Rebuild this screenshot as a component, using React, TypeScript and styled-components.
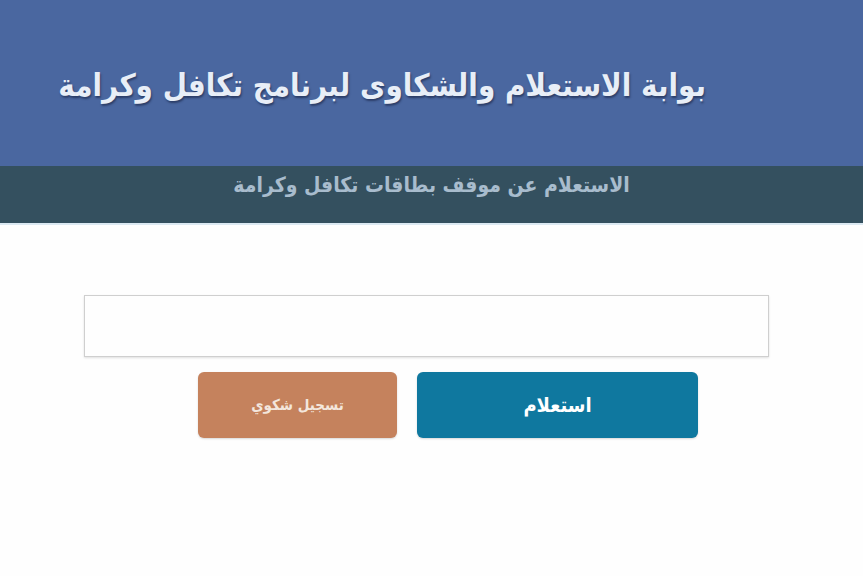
import React from "react";
import styled, { createGlobalStyle } from "styled-components";

const Global = createGlobalStyle`
  html, body { margin: 0; padding: 0; background: #ffffff; }
  body { font-family: "DejaVu Sans Condensed", "DejaVu Sans", sans-serif; }
`;

const Page = styled.div`
  width: 863px;
  height: 576px;
  display: flex;
  flex-direction: column;
  background: #fefefe;
  direction: rtl;
`;

const Header = styled.header`
  height: 166px;
  background: #4a67a0;
  display: flex;
  align-items: center;
  padding-right: 157px;
  padding-top: 4px;
  box-sizing: border-box;
`;

const Title = styled.h1`
  margin: 0;
  font-family: "DejaVu Sans Condensed", "DejaVu Sans", sans-serif;
  font-size: 31px;
  font-weight: bold;
  color: #e8eef7;
  text-shadow: 1px 2px 2px rgba(20, 30, 60, 0.55);
  white-space: nowrap;
`;

const SubBar = styled.div`
  height: 59px;
  background: #34505f;
  display: flex;
  justify-content: center;
  align-items: flex-start;
  padding-top: 7px;
  box-sizing: border-box;
  border-bottom: 2px solid #dbe9f2;
`;

const SubTitle = styled.h2`
  margin: 0;
  font-family: "DejaVu Sans Condensed", "DejaVu Sans", sans-serif;
  font-size: 21px;
  font-weight: bold;
  color: #a8bccd;
  white-space: nowrap;
`;

const Form = styled.div`
  display: flex;
  flex-direction: column;
  padding: 70px 94px 0 84px;
  gap: 15px;
`;

const Input = styled.input`
  height: 62px;
  width: 685px;
  box-sizing: border-box;
  border: 1px solid #cfcfcf;
  box-shadow: 0 1px 2px rgba(0, 0, 0, 0.12);
  background: #fefefe;
  outline: none;
`;

const Buttons = styled.div`
  display: flex;
  gap: 20px;
  padding-right: 71px;
`;

const Button = styled.button<{ $variant: "primary" | "secondary" }>`
  height: 66px;
  width: ${(p) => (p.$variant === "primary" ? "281px" : "199px")};
  border: none;
  border-radius: 6px;
  background: ${(p) => (p.$variant === "primary" ? "#0f789f" : "#c5825d")};
  color: ${(p) => (p.$variant === "primary" ? "#ffffff" : "#f3e6dc")};
  font-family: "DejaVu Sans Condensed", "DejaVu Sans", sans-serif;
  font-weight: bold;
  font-size: ${(p) => (p.$variant === "primary" ? "20px" : "15px")};
  box-shadow: 0 1px 2px rgba(0, 0, 0, 0.15);
  cursor: pointer;
`;

export default function App() {
  return (
    <>
      <Global />
      <Page>
        <Header>
          <Title>بوابة الاستعلام والشكاوى لبرنامج تكافل وكرامة</Title>
        </Header>
        <SubBar>
          <SubTitle>الاستعلام عن موقف بطاقات تكافل وكرامة</SubTitle>
        </SubBar>
        <Form>
          <Input type="text" />
          <Buttons>
            <Button $variant="primary">استعلام</Button>
            <Button $variant="secondary">تسجيل شكوي</Button>
          </Buttons>
        </Form>
      </Page>
    </>
  );
}
